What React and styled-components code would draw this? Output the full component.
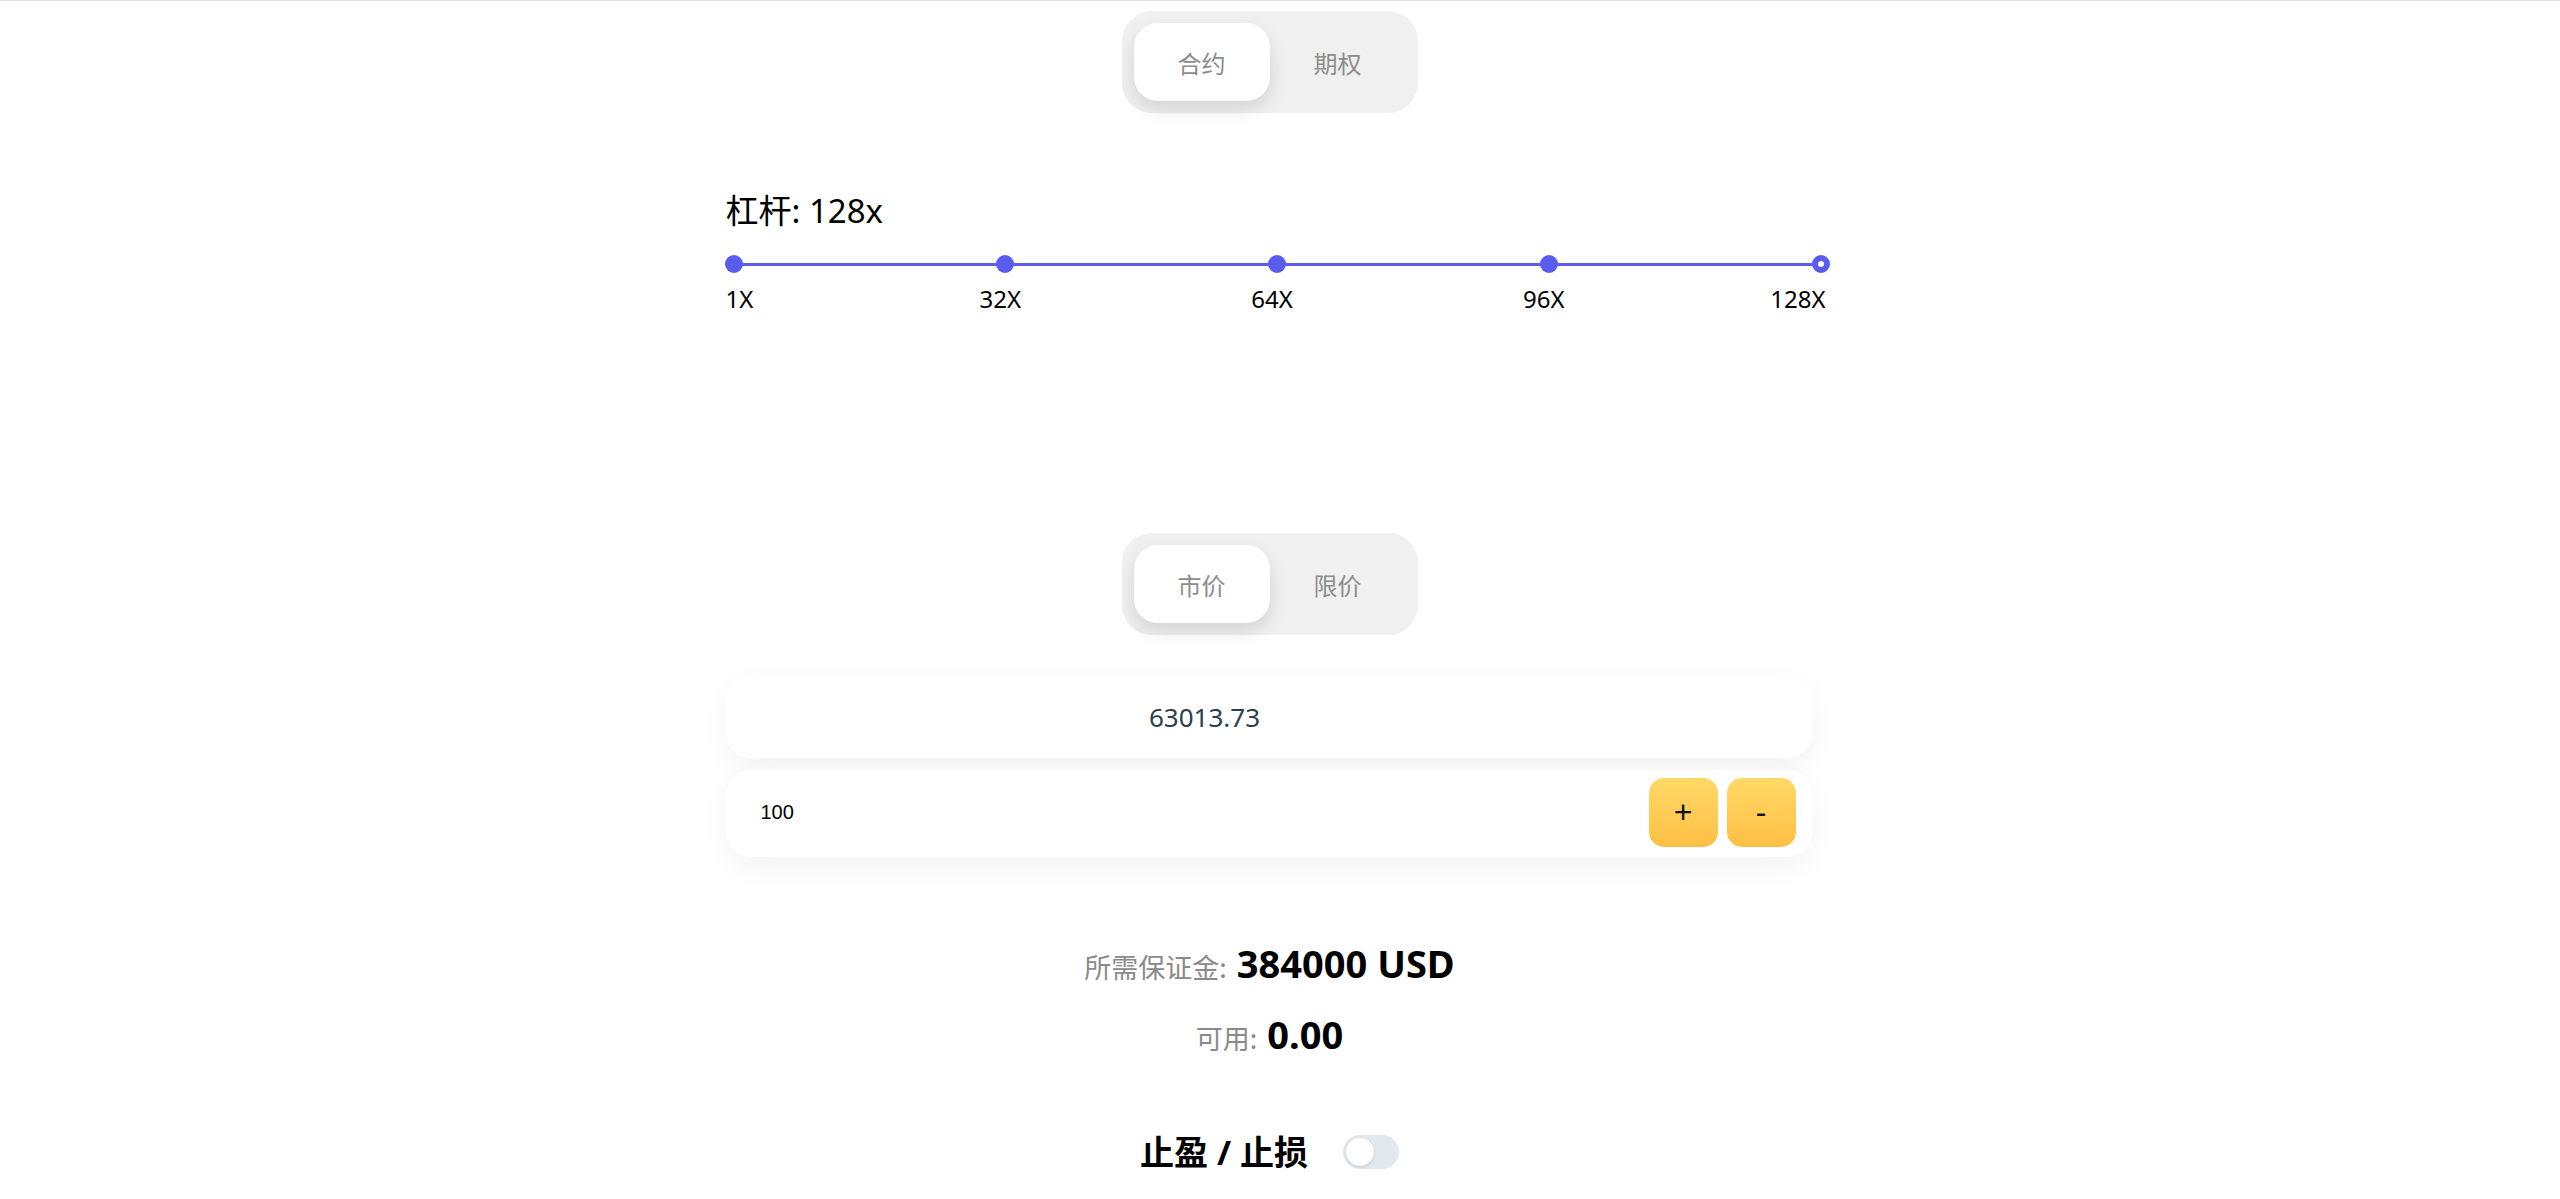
import React, { useState } from 'react';
import styled, { createGlobalStyle } from 'styled-components';

const GlobalStyle = createGlobalStyle`
  html, body {
    margin: 0;
    padding: 0;
    background: #ffffff;
  }
  body {
    font-family: "Noto Sans", "Noto Sans CJK SC", sans-serif;
    color: #000;
  }
`;

const ACCENT = '#5a5cf0';
const MARKS = ['1X', '32X', '64X', '96X', '128X'];

const Page = styled.div`
  border-top: 1px solid #e6e0e0;
  padding-right: 21px;
  display: flex;
  justify-content: center;
`;

const Column = styled.main`
  width: 1100px;
  display: flex;
  flex-direction: column;
`;

/* leverage block and order inputs sit a few px right of the centred column */
const Section = styled.section`
  padding-left: 6px;
  margin-top: ${p => p.$top || 0}px;
`;

const Segmented = styled.div`
  align-self: center;
  display: flex;
  padding: 12px;
  margin-top: ${p => p.$top}px;
  background: #f0f0f0;
  border-radius: 30px;
`;

const Segment = styled.button`
  width: 136px;
  height: 78px;
  border: none;
  border-radius: 24px;
  font-family: "Noto Sans CJK SC", sans-serif;
  font-size: 24px;
  color: #8c8c8c;
  cursor: pointer;
  background: ${p => (p.$active ? '#ffffff' : 'transparent')};
  box-shadow: ${p => (p.$active ? '0 8px 18px rgba(0, 0, 0, 0.12)' : 'none')};
`;

const LeverageTitle = styled.div`
  font-size: 33px;
  line-height: 38px;
`;

const Rail = styled.div`
  position: relative;
  width: 1087px;
  height: 18px;
  margin: 25px 0 0 8px;
`;

const Track = styled.div`
  position: absolute;
  left: 0;
  right: 0;
  top: 8px;
  height: 3px;
  background: ${ACCENT};
`;

const Dot = styled.span`
  position: absolute;
  top: 0;
  width: 18px;
  height: 18px;
  margin-left: -9px;
  border-radius: 50%;
  box-sizing: border-box;
  background: ${p => (p.$thumb ? '#ffffff' : ACCENT)};
  border: ${p => (p.$thumb ? `6px solid ${ACCENT}` : 'none')};
`;

const Marks = styled.div`
  position: relative;
  width: 1087px;
  height: 28px;
  margin: 12px 0 0 8px;
  font-size: 24px;
  line-height: 28px;
`;

const markShift = {
  start: 'translateX(-8px)',
  mid: 'translateX(calc(-50% - 5px))',
  end: 'translateX(calc(-100% + 5px))',
};

const Mark = styled.span`
  position: absolute;
  top: 0;
  white-space: nowrap;
  transform: ${p => markShift[p.$edge]};
`;

const Card = styled.div`
  display: flex;
  align-items: center;
  gap: 9px;
  width: 1086px;
  height: ${p => p.$h}px;
  box-sizing: border-box;
  margin-top: ${p => p.$top}px;
  padding: ${p => p.$pad};
  background: #ffffff;
  border-radius: 24px;
  box-shadow: 0 10px 30px rgba(0, 0, 0, 0.05);
`;

const PriceInput = styled.input`
  flex: 1;
  min-width: 0;
  border: none;
  outline: none;
  background: transparent;
  text-align: center;
  font-family: "Noto Sans", sans-serif;
  font-size: 26px;
  color: #2c3e50;
`;

const AmountInput = styled.input`
  flex: 1;
  min-width: 0;
  border: none;
  outline: none;
  background: transparent;
  font-family: "Liberation Sans", Arial, sans-serif;
  font-size: 20px;
  color: #000;
`;

const StepButton = styled.button`
  width: 69px;
  height: 69px;
  flex: none;
  border: none;
  border-radius: 15px;
  background: linear-gradient(180deg, #ffd966 0%, #ffbf45 100%);
  font-family: "Liberation Sans", Arial, sans-serif;
  font-size: 32px;
  color: #111;
  cursor: pointer;
`;

const InfoRow = styled.div`
  display: flex;
  justify-content: center;
  align-items: baseline;
  gap: 10px;
  margin-top: ${p => p.$top}px;
  line-height: 48px;
`;

const InfoLabel = styled.span`
  font-family: "Noto Sans CJK SC", sans-serif;
  font-size: 27px;
  color: #8a8a8a;
`;

const InfoValue = styled.span`
  font-size: 38px;
  font-weight: 700;
  color: #000;
`;

const ToggleRow = styled.div`
  display: flex;
  justify-content: center;
  align-items: center;
  gap: 35px;
  margin-top: 70px;
`;

const ToggleLabel = styled.span`
  font-family: "Noto Sans", "Noto Sans CJK SC", sans-serif;
  font-size: 34px;
  font-weight: 700;
  line-height: 40px;
`;

const Switch = styled.button`
  position: relative;
  width: 56px;
  height: 34px;
  padding: 0;
  border: none;
  border-radius: 17px;
  background: ${p => (p.$on ? ACCENT : '#e2e8f0')};
  cursor: pointer;
`;

const Knob = styled.span`
  position: absolute;
  top: 3px;
  left: ${p => (p.$on ? '25px' : '3px')};
  width: 28px;
  height: 28px;
  border-radius: 50%;
  background: #ffffff;
  box-shadow: 0 1px 3px rgba(0, 0, 0, 0.15);
  transition: left 0.2s;
`;

function SegmentGroup({ items, top }) {
  const [active, setActive] = useState(0);
  return (
    <Segmented $top={top}>
      {items.map((label, i) => (
        <Segment key={label} $active={i === active} onClick={() => setActive(i)}>
          {label}
        </Segment>
      ))}
    </Segmented>
  );
}

function edgeOf(i, n) {
  if (i === 0) return 'start';
  if (i === n - 1) return 'end';
  return 'mid';
}

export default function App() {
  const [amount, setAmount] = useState(100);
  const [tpsl, setTpsl] = useState(false);
  const last = MARKS.length - 1;

  return (
    <Page>
      <GlobalStyle />
      <Column>
        <SegmentGroup items={['合约', '期权']} top={10} />

        <Section $top={79}>
          <LeverageTitle>杠杆: 128x</LeverageTitle>
          <Rail>
            <Track />
            {MARKS.map((m, i) => (
              <Dot key={m} $thumb={i === last} style={{ left: `${(i / last) * 100}%` }} />
            ))}
          </Rail>
          <Marks>
            {MARKS.map((m, i) => (
              <Mark key={m} $edge={edgeOf(i, MARKS.length)} style={{ left: `${(i / last) * 100}%` }}>
                {m}
              </Mark>
            ))}
          </Marks>
        </Section>

        <SegmentGroup items={['市价', '限价']} top={220} />

        <Section>
          <Card $top={40} $h={83} $pad="0 128px 0 0">
            <PriceInput defaultValue="63013.73" />
          </Card>
          <Card $top={12} $h={87} $pad="8px 16px 10px 33px">
            <AmountInput value={amount} onChange={e => setAmount(e.target.value)} />
            <StepButton onClick={() => setAmount(Number(amount) + 1)}>+</StepButton>
            <StepButton onClick={() => setAmount(Math.max(0, Number(amount) - 1))}>-</StepButton>
          </Card>
        </Section>

        <InfoRow $top={82}>
          <InfoLabel>所需保证金:</InfoLabel>
          <InfoValue>384000 USD</InfoValue>
        </InfoRow>
        <InfoRow $top={19}>
          <InfoLabel>可用:</InfoLabel>
          <InfoValue>0.00</InfoValue>
        </InfoRow>

        <ToggleRow>
          <ToggleLabel>止盈 / 止损</ToggleLabel>
          <Switch $on={tpsl} onClick={() => setTpsl(!tpsl)}>
            <Knob $on={tpsl} />
          </Switch>
        </ToggleRow>
      </Column>
    </Page>
  );
}
